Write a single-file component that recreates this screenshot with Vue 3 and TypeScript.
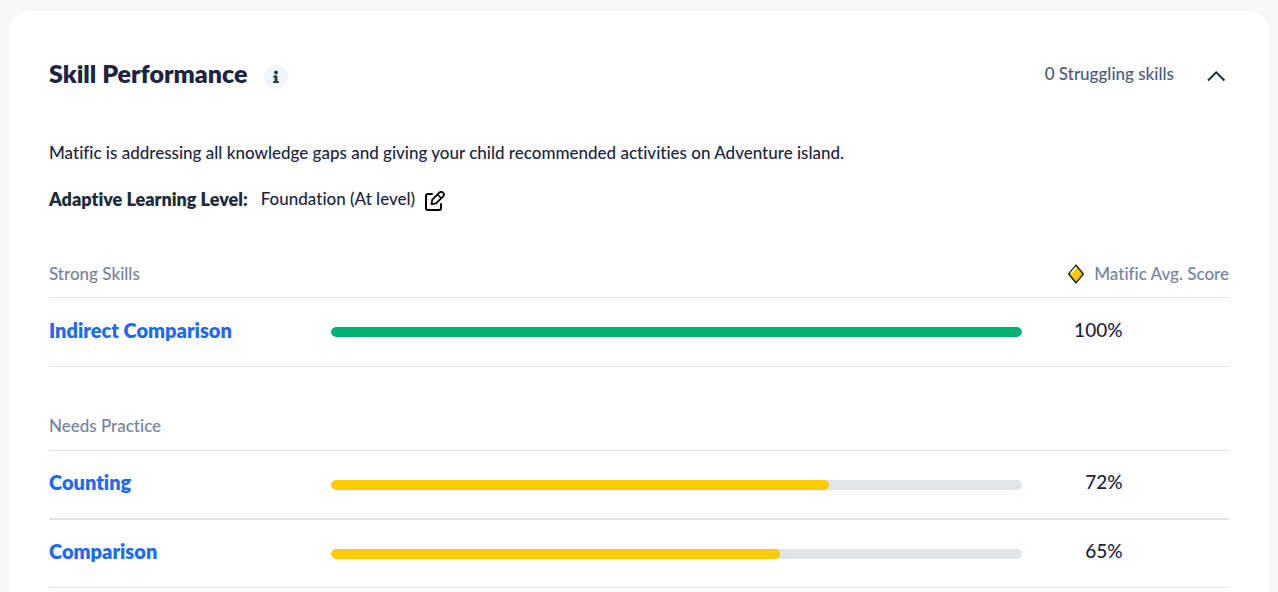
<script setup lang="ts">
import { ref } from 'vue'

interface Skill {
  name: string
  score: number
}

interface SkillGroup {
  title: string
  tone: 'strong' | 'practice'
  showScoreLabel: boolean
  skills: Skill[]
}

const open = ref(true)

const groups: SkillGroup[] = [
  {
    title: 'Strong Skills',
    tone: 'strong',
    showScoreLabel: true,
    skills: [{ name: 'Indirect Comparison', score: 100 }],
  },
  {
    title: 'Needs Practice',
    tone: 'practice',
    showScoreLabel: false,
    skills: [
      { name: 'Counting', score: 72 },
      { name: 'Comparison', score: 65 },
    ],
  },
]
</script>

<template>
  <main class="card">
    <header class="head">
      <h1>Skill Performance</h1>
      <button class="info" type="button" aria-label="About skill performance">
        <svg width="8" height="14" viewBox="0 0 8 14" fill="currentColor" aria-hidden="true">
          <circle cx="4" cy="2.500" r="1.900" />
          <path d="M1.200 5.500h4.200v5.500h1.400v2H1.200v-2h1.400V7.500H1.200z" />
        </svg>
      </button>
      <span class="summary">0 Struggling skills</span>
      <button
        class="toggle"
        type="button"
        aria-label="Toggle skill details"
        :aria-expanded="open"
        @click="open = !open"
      >
        <svg width="20" height="12" viewBox="0 0 20 12" fill="none" stroke="currentColor" stroke-width="2" aria-hidden="true">
          <path d="M2 10.500 10.200 2.300l8.200 8.200" />
        </svg>
      </button>
    </header>

    <div v-if="open">
      <p class="intro">
        Matific is addressing all knowledge gaps and giving your child recommended activities on Adventure island.
      </p>
      <div class="level">
        <strong>Adaptive Learning Level:</strong>
        <span>Foundation (At level)</span>
        <button class="edit" type="button" aria-label="Edit learning level">
          <svg width="20" height="20" viewBox="0 0 20 20" fill="none" stroke="currentColor" stroke-width="2" stroke-linecap="round" stroke-linejoin="round" aria-hidden="true">
            <path d="M7 3H3a2 2 0 0 0-2 2v12a2 2 0 0 0 2 2h11a2 2 0 0 0 2-2v-4" />
            <path d="M6.500 13.200l.8-4.500 7-7a2.500 2.500 0 0 1 3.800 3.600l-7 7z" stroke-width="1.800" />
            <path d="M12.800 3.800l3.200 3.200" stroke-width="1.500" />
          </svg>
        </button>
      </div>

      <table v-for="group in groups" :key="group.title" :class="group.tone">
        <colgroup>
          <col class="col-name" />
          <col class="col-bar" />
          <col class="col-score" />
        </colgroup>
        <thead>
          <tr>
            <th scope="col">{{ group.title }}</th>
            <th colspan="2">
              <span v-if="group.showScoreLabel" class="score-label">
                <svg width="18" height="20" viewBox="0 0 18 20" aria-hidden="true">
                  <path d="M9 1.200 16.300 10 9 18.800 1.700 10z" fill="#ffca00" stroke="#1c2c3c" stroke-width="1.600" stroke-linejoin="round" />
                  <path d="M9 3.200 4 9.300" stroke="#fff" stroke-width="1.500" />
                  <path d="M14.500 10 9 16.700" stroke="#f5a800" stroke-width="1.500" />
                </svg>
                Matific Avg. Score
              </span>
            </th>
          </tr>
        </thead>
        <tbody>
          <tr v-for="skill in group.skills" :key="skill.name">
            <td><a href="#">{{ skill.name }}</a></td>
            <td>
              <div class="track">
                <div class="fill" :style="{ width: skill.score + '%' }"></div>
              </div>
            </td>
            <td><span class="score">{{ skill.score }}%</span></td>
          </tr>
        </tbody>
      </table>
    </div>
  </main>
</template>

<style>
body {
  background: #f8f8f8;
}
</style>

<style scoped>
.card {
  margin: 11px 9px 0;
  padding: 40px 40px 4px;
  background: #fff;
  border-radius: 20px 20px 0 0;
  color: #1c2540;
  font-family: Lato, "Liberation Sans", sans-serif;
  font-size: 17px;
  font-variant-ligatures: none;
  font-weight: 500;
  line-height: 24px;
}
.head {
  display: flex;
  align-items: center;
  height: 46px;
}
h1 {
  margin: 0;
  padding-bottom: 3px;
  font-size: 25px;
  font-weight: 800;
  line-height: 32px;
}
button {
  display: flex;
  align-items: center;
  justify-content: center;
  padding: 0;
  border: 0;
  background: none;
  cursor: pointer;
}
.info {
  width: 24px;
  height: 24px;
  margin: 5px 0 0 17px;
  border-radius: 50%;
  background: #f1f5fe;
  color: #263845;
}
.summary {
  margin-left: auto;
  color: #4a5b78;
}
.toggle {
  width: 24px;
  height: 24px;
  margin: 4px 1px 0 30px;
  color: #1c2c3c;
}
.intro {
  margin: 44px 0 0;
}
.level {
  display: flex;
  align-items: center;
  margin-top: 22px;
}
.level strong {
  margin-right: 13px;
  color: #1c2c3c;
  font-size: 18px;
  font-weight: 800;
}
.edit {
  margin: 4px 0 0 10px;
  color: #000;
}
table {
  width: 100%;
  table-layout: fixed;
  border-collapse: separate;
  border-spacing: 0;
}
.strong {
  margin-top: 51px;
}
.practice {
  margin-top: 47px;
}
.col-name {
  width: 23.9%;
}
.col-bar {
  width: 58.6%;
}
th,
td {
  padding: 0;
  text-align: left;
}
th {
  padding-bottom: 11px;
  border-bottom: 1px solid #e3e4e8;
  color: #75829d;
  font-weight: 500;
}
.practice th {
  padding-bottom: 12px;
}
.score-label {
  display: flex;
  align-items: center;
  justify-content: flex-end;
  gap: 9px;
}
td {
  height: 68px;
  border-bottom: 1px solid #e3e4e8;
  font-size: 19px;
}
.practice td {
  height: 67px;
}
tr:not(:last-child) > td {
  border-bottom-width: 2px;
}
td a {
  display: block;
  padding-bottom: 5px;
  color: #1e69f5;
  font-size: 20px;
  font-weight: 800;
  text-decoration: none;
}
.track {
  height: 10px;
  overflow: hidden;
  border-radius: 5px;
  background: #e3e4e8;
}
.fill {
  height: 100%;
  border-radius: 5px;
  background: #ffca00;
}
.strong .fill {
  background: #00b274;
}
.score {
  display: block;
  width: 100px;
  padding-bottom: 5px;
  text-align: right;
}
</style>
